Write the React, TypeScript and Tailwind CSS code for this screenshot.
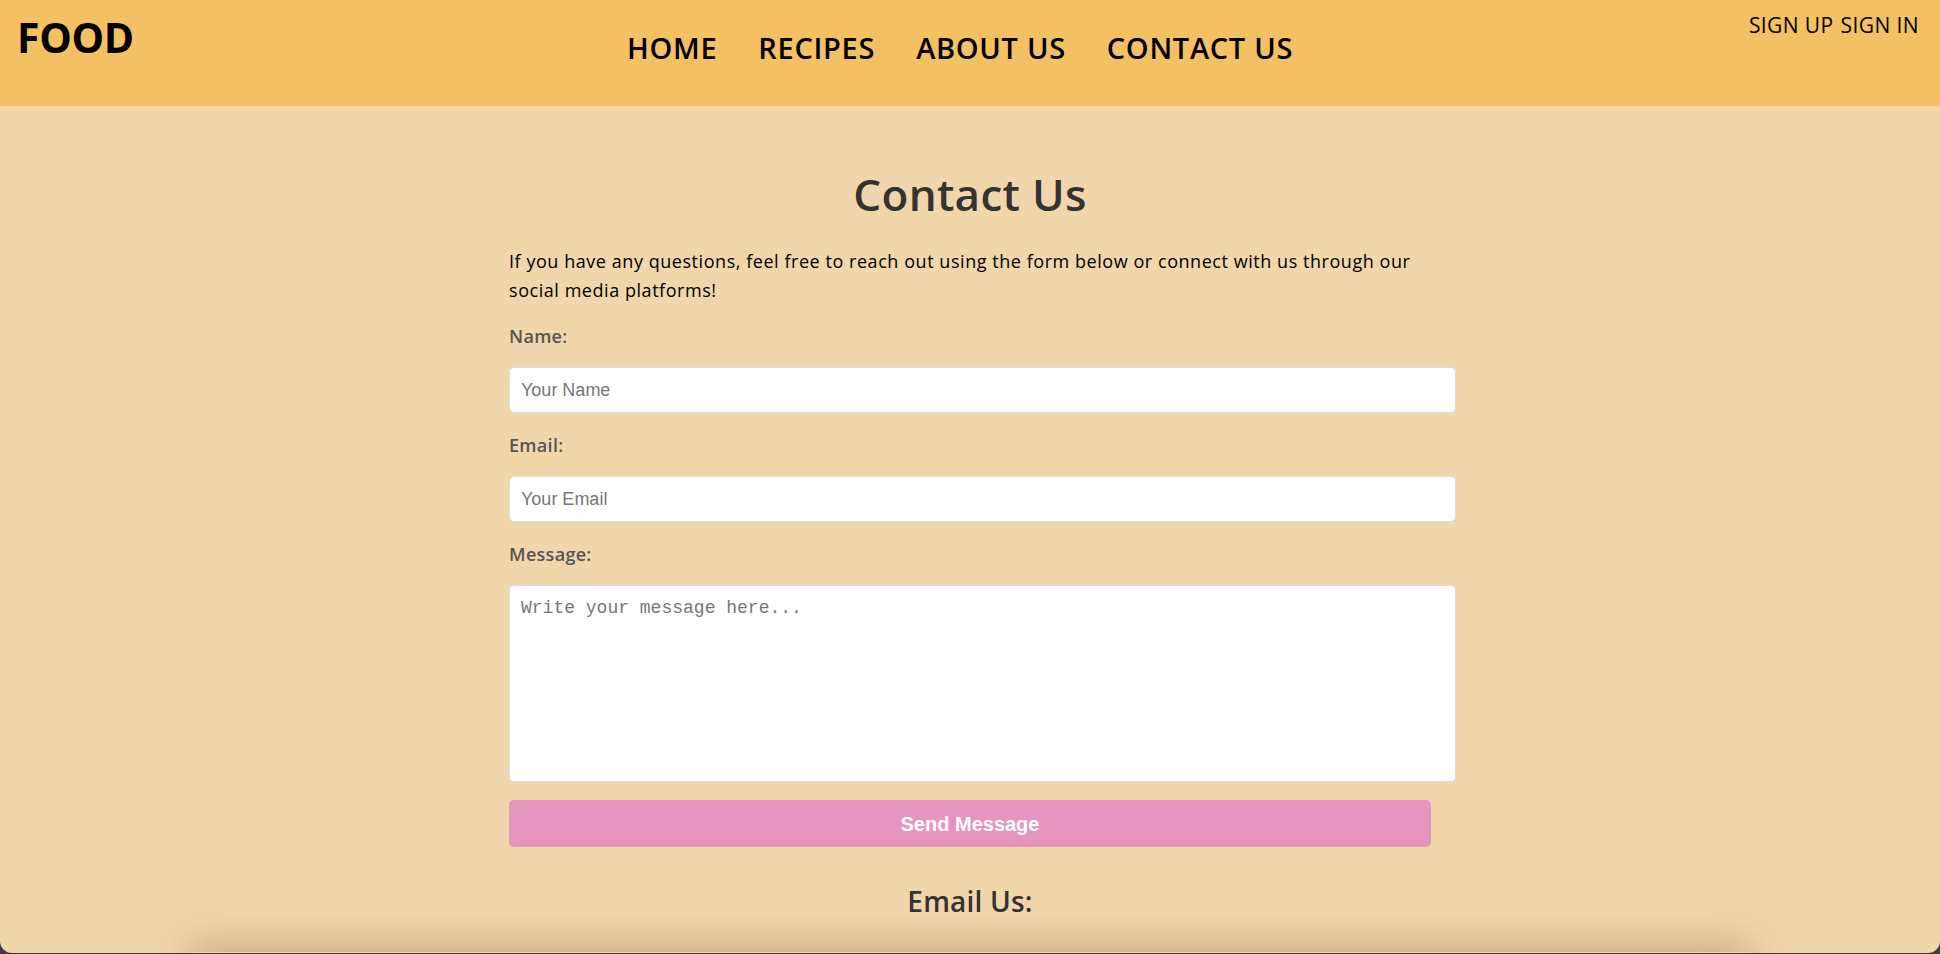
const font = "font-['Open_Sans',_'Noto_Sans',_sans-serif]";

const navItems = ["HOME", "RECIPES", "ABOUT US", "CONTACT US"];

function Header() {
  return (
    <header className="relative flex h-[106px] items-start justify-between bg-[#F4C064] pl-[17px] pr-[21px] text-black">
      <div className="pt-[12px] text-[41px] font-bold leading-[50px] tracking-[-0.3px]">FOOD</div>

      <nav className="absolute left-[627px] top-[29px] flex gap-[41px]">
        {navItems.map((item) => (
          <a key={item} href="#" className="text-[29px] font-semibold leading-[38px] tracking-[0.7px]">
            {item}
          </a>
        ))}
      </nav>

      <div className="flex gap-[7px] pt-[10px] text-[21px] leading-[30px] tracking-[0.4px]">
        <a href="#">SIGN UP</a>
        <a href="#">SIGN IN</a>
      </div>
    </header>
  );
}

function Field({ label, children }: { label: string; children: React.ReactNode }) {
  return (
    <div className="grid gap-[18px]">
      <label className="text-[18px] font-semibold leading-[26px] tracking-[0.3px] text-[#555]">{label}</label>
      {children}
    </div>
  );
}

const boxClass =
  "block w-[947px] rounded-[5px] border border-[#ddd] bg-white px-[11px] text-[#333] placeholder:text-[#767676] outline-none";

export default function App() {
  return (
    <div className={`h-[954px] overflow-hidden bg-[#3c3c3c] ${font}`}>
      <div className="h-[953px] overflow-hidden rounded-b-[12px] bg-[#F2D6AB]">
        <Header />

        <main className="mx-auto w-[922px] pt-[62px]">
          <h1 className="text-center text-[44px] font-semibold leading-[52px] tracking-[0.3px] text-[#333]">
            Contact Us
          </h1>

          <p className="mt-[27px] text-[18px] leading-[29px] tracking-[0.55px] text-black">
            If you have any questions, feel free to reach out using the form below or connect with us through our
            social media platforms!
          </p>

          <form className="mt-[18px] grid gap-[19px]">
            <Field label="Name:">
              <input
                type="text"
                placeholder="Your Name"
                className={`${boxClass} h-[46px] font-['Liberation_Sans',_Arial,_sans-serif] text-[18px]`}
              />
            </Field>
            <Field label="Email:">
              <input
                type="email"
                placeholder="Your Email"
                className={`${boxClass} h-[46px] font-['Liberation_Sans',_Arial,_sans-serif] text-[18px]`}
              />
            </Field>
            <Field label="Message:">
              <textarea
                placeholder="Write your message here..."
                className={`${boxClass} h-[197px] resize-none py-[9px] font-['Liberation_Mono',_monospace] text-[18px]`}
              />
            </Field>
          </form>

          <button
            type="button"
            className="mt-[18px] h-[47px] w-full rounded-[5px] bg-[#E695BE] font-['Liberation_Sans',_Arial,_sans-serif] text-[20px] font-bold text-white"
          >
            Send Message
          </button>

          <h2 className="mt-[37px] text-center text-[28px] font-semibold leading-[34px] tracking-[0.2px] text-[#333]">
            Email Us:
          </h2>
        </main>

        <div className="mx-auto mt-[34px] h-[120px] w-[1560px] bg-[#F2D6AB] shadow-[0_-6px_40px_rgba(110,80,30,0.35)]" />
      </div>
    </div>
  );
}
